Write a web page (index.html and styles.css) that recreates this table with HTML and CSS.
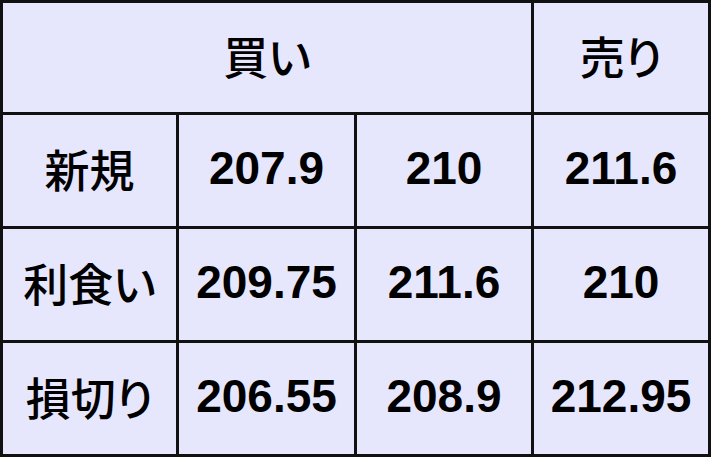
FILE: index.html
```html
<!DOCTYPE html>
<html lang="ja">
<head>
<meta charset="utf-8">
<link rel="stylesheet" href="styles.css">
</head>
<body>
<div class="table">
  <div class="cell head span3 jp">買い</div>
  <div class="cell head jp">売り</div>

  <div class="cell jp">新規</div>
  <div class="cell num">207.9</div>
  <div class="cell num">210</div>
  <div class="cell num">211.6</div>

  <div class="cell jp">利食い</div>
  <div class="cell num">209.75</div>
  <div class="cell num">211.6</div>
  <div class="cell num">210</div>

  <div class="cell jp">損切り</div>
  <div class="cell num">206.55</div>
  <div class="cell num">208.9</div>
  <div class="cell num">212.95</div>
</div>
</body>
</html>
```
FILE: styles.css
```css
html, body {
  margin: 0;
  padding: 0;
  background: #e6e6fc;
}
.table {
  width: 711px;
  height: 457px;
  box-sizing: border-box;
  display: grid;
  grid-template-columns: 173px 175px 174px 174px;
  grid-template-rows: 109px 111px 111px 111px;
  gap: 3px;
  padding: 3px;
  background: #111111;
}
.cell {
  background: #e6e6fc;
  display: flex;
  align-items: center;
  justify-content: center;
  color: #000;
  white-space: nowrap;
  box-sizing: border-box;
  padding-bottom: 5px;
}
.span3 {
  grid-column: span 3;
}
.jp {
  font-family: "Noto Sans CJK JP", "Noto Sans", sans-serif;
  font-weight: 500;
  font-size: 45px;
  font-feature-settings: "palt";
}
.num {
  font-family: "Liberation Sans", Arial, sans-serif;
  font-weight: bold;
  font-size: 46px;
}
```
